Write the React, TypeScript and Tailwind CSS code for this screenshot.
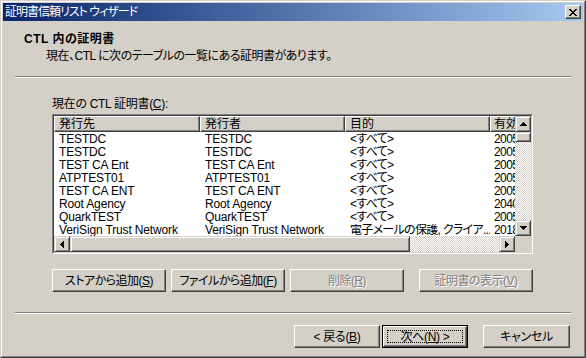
import React from "react";

const raised =
  "border border-t-white border-l-white border-r-[#404040] border-b-[#404040] shadow-[inset_-1px_-1px_#808080]";
const sbtn =
  "border border-t-[#d4d0c8] border-l-[#d4d0c8] border-r-[#404040] border-b-[#404040] shadow-[inset_1px_1px_#ffffff,inset_-1px_-1px_#808080] bg-[#d4d0c8]";
const track =
  "bg-[image:repeating-conic-gradient(#d4d0c8_0_25%,#ffffff_0_50%)] bg-[length:2px_2px]";

const TRI: Record<string, { d: string; w: number; h: number }> = {
  up: { d: "M3 0h1v1h-1zM2 1h3v1h-3zM1 2h5v1h-5zM0 3h7v1h-7z", w: 7, h: 4 },
  down: { d: "M0 0h7v1h-7zM1 1h5v1h-5zM2 2h3v1h-3zM3 3h1v1h-1z", w: 7, h: 4 },
  right: { d: "M0 0h1v7h-1zM1 1h1v5h-1zM2 2h1v3h-1zM3 3h1v1h-1z", w: 4, h: 7 },
  left: { d: "M3 0h1v7h-1zM2 1h1v5h-1zM1 2h1v3h-1zM0 3h1v1h-1z", w: 4, h: 7 },
};

function Arrow({ dir }: { dir: "up" | "down" | "left" | "right" }) {
  const t = TRI[dir];
  return (
    <div className={`${sbtn} w-[16px] h-[16px] flex items-center justify-center shrink-0`}>
      <svg width={t.w} height={t.h} viewBox={`0 0 ${t.w} ${t.h}`} shapeRendering="crispEdges">
        <path d={t.d} fill="#000" />
      </svg>
    </div>
  );
}

const rows: [string, string, string, string][] = [
  ["TESTDC", "TESTDC", "<すべて>", "2005/02/13"],
  ["TESTDC", "TESTDC", "<すべて>", "2005/02/13"],
  ["TEST CA Ent", "TEST CA Ent", "<すべて>", "2005/06/02"],
  ["ATPTEST01", "ATPTEST01", "<すべて>", "2005/04/21"],
  ["TEST CA ENT", "TEST CA ENT", "<すべて>", "2005/06/02"],
  ["Root Agency", "Root Agency", "<すべて>", "2040/01/01"],
  ["QuarkTEST", "QuarkTEST", "<すべて>", "2005/03/10"],
  ["VeriSign Trust Network", "VeriSign Trust Network", "電子メールの保護, クライア...", "2018/05/19"],
];

export default function App() {
  return (
    <div className="w-[586px] h-[358px] bg-[#d4d0c8] text-[12px] text-black font-['Liberation_Sans','Noto_Sans_CJK_JP',sans-serif] [font-feature-settings:'palt'] border border-t-[#d4d0c8] border-l-[#d4d0c8] border-r-[#404040] border-b-[#404040]">
      <div className="h-full border border-t-white border-l-white border-r-[#808080] border-b-[#808080] p-px flex flex-col">
        {/* Title bar */}
        <div className="h-[18px] shrink-0 bg-linear-to-r from-[#0a246a] to-[#a6caf0] flex items-center justify-between pl-[2px] pr-[2px]">
          <span className="text-white leading-[18px] whitespace-nowrap tracking-[-1px]">証明書信頼リスト ウィザード</span>
          <div className={`${raised} bg-[#d4d0c8] w-[16px] h-[14px] flex items-center justify-center`}>
            <svg width="8" height="7" viewBox="0 0 8 7" shapeRendering="crispEdges">
              <path
                d="M0 0h2v1h-2zM6 0h2v1h-2zM1 1h2v1h-2zM5 1h2v1h-2zM2 2h4v1h-4zM3 3h2v1h-2zM2 4h4v1h-4zM1 5h2v1h-2zM5 5h2v1h-2zM0 6h2v1h-2zM6 6h2v1h-2z"
                fill="#000"
              />
            </svg>
          </div>
        </div>

        {/* Header */}
        <div className="pt-[10px] pl-[21px] h-[26px] leading-[16px] font-bold whitespace-nowrap tracking-[0.5px]">CTL 内の証明書</div>
        <div className="mt-[1px] pl-[43px] h-[16px] leading-[16px] whitespace-nowrap tracking-[-0.5px]">
          現在、CTL に次のテーブルの一覧にある証明書があります。
        </div>
        <div className="mt-[12px] mx-[12px] h-[2px] border-t border-t-[#808080] border-b border-b-white" />

        {/* Label */}
        <div className="mt-[18px] pl-[49px] h-[16px] leading-[16px] whitespace-nowrap tracking-[-0.3px]">
          現在の CTL 証明書(<u>C</u>):
        </div>

        {/* List view */}
        <div className="mt-[2px] ml-[49px] w-[481px] h-[140px] border border-t-[#808080] border-l-[#808080] border-r-white border-b-white">
          <div className="h-full border border-t-[#404040] border-l-[#404040] border-r-[#d4d0c8] border-b-[#d4d0c8] bg-white grid grid-cols-[461px_16px] grid-rows-[120px_16px]">
            <div className="overflow-hidden">
              <div className="flex h-[16px] bg-[#d4d0c8]">
                <div className={`${raised} w-[146px] shrink-0 pl-[4px] leading-[14px] whitespace-nowrap overflow-hidden`}>発行先</div>
                <div className={`${raised} w-[145px] shrink-0 pl-[4px] leading-[14px] whitespace-nowrap overflow-hidden`}>発行者</div>
                <div className={`${raised} w-[145px] shrink-0 pl-[4px] leading-[14px] whitespace-nowrap overflow-hidden`}>目的</div>
                <div className={`${raised} w-[80px] shrink-0 pl-[3px] leading-[14px] whitespace-nowrap overflow-hidden`}>有効期限</div>
              </div>
              <div className="pt-[1px]">
                {rows.map((r, i) => (
                  <div key={i} className="flex h-[13px] leading-[13px]">
                    <div className="w-[146px] shrink-0 pl-[5px] whitespace-nowrap overflow-hidden tracking-[-0.15px]">{r[0]}</div>
                    <div className="w-[145px] shrink-0 pl-[5px] whitespace-nowrap overflow-hidden tracking-[-0.15px]">{r[1]}</div>
                    <div className="w-[145px] shrink-0 pl-[5px] whitespace-nowrap overflow-hidden tracking-[-0.7px]">{r[2]}</div>
                    <div className="w-[80px] shrink-0 pl-[4px] whitespace-nowrap overflow-hidden tracking-[-0.6px]">{r[3]}</div>
                  </div>
                ))}
              </div>
            </div>
            {/* vertical scrollbar */}
            <div className="flex flex-col">
              <Arrow dir="up" />
              <div className={`${sbtn} h-[10px] shrink-0`} />
              <div className={`${track} flex-1`} />
              <Arrow dir="down" />
            </div>
            {/* horizontal scrollbar */}
            <div className="flex">
              <Arrow dir="left" />
              <div className={`${sbtn} w-[340px] shrink-0`} />
              <div className={`${track} flex-1`} />
              <Arrow dir="right" />
            </div>
            <div className="bg-[#d4d0c8]" />
          </div>
        </div>

        {/* Buttons */}
        <div className="mt-[15px] ml-[49px] flex h-[23px] tracking-[-0.5px]">
          <div className={`${raised} w-[114px] flex items-center justify-center whitespace-nowrap`}>
            ストアから追加(<u>S</u>)
          </div>
          <div className={`${raised} ml-[5px] w-[114px] flex items-center justify-center whitespace-nowrap`}>
            ファイルから追加(<u>F</u>)
          </div>
          <div className={`${raised} ml-[5px] w-[114px] flex items-center justify-center whitespace-nowrap text-[#808080] [text-shadow:1px_1px_0_#ffffff]`}>
            削除(<u>R</u>)
          </div>
          <div className={`${raised} ml-[15px] w-[114px] flex items-center justify-center whitespace-nowrap text-[#808080] [text-shadow:1px_1px_0_#ffffff]`}>
            証明書の表示(<u>V</u>)
          </div>
        </div>

        <div className="mt-[20px] mx-[12px] h-[2px] border-t border-t-[#808080] border-b border-b-white" />

        {/* Bottom buttons */}
        <div className="mt-[11px] mr-[13px] flex justify-end h-[23px] tracking-[-0.3px]">
          <div className={`${raised} w-[86px] flex items-center justify-center whitespace-nowrap`}>
            &lt; 戻る(<u>B</u>)
          </div>
          <div className="ml-[2px] w-[86px] border border-black">
            <div className={`${raised} relative h-full flex items-center justify-center whitespace-nowrap`}>
              <span className="absolute inset-[3px] border border-dotted border-black" />
              次へ(<u>N</u>) &gt;
            </div>
          </div>
          <div className={`${raised} ml-[15px] w-[87px] flex items-center justify-center whitespace-nowrap`}>
            キャンセル
          </div>
        </div>
      </div>
    </div>
  );
}
